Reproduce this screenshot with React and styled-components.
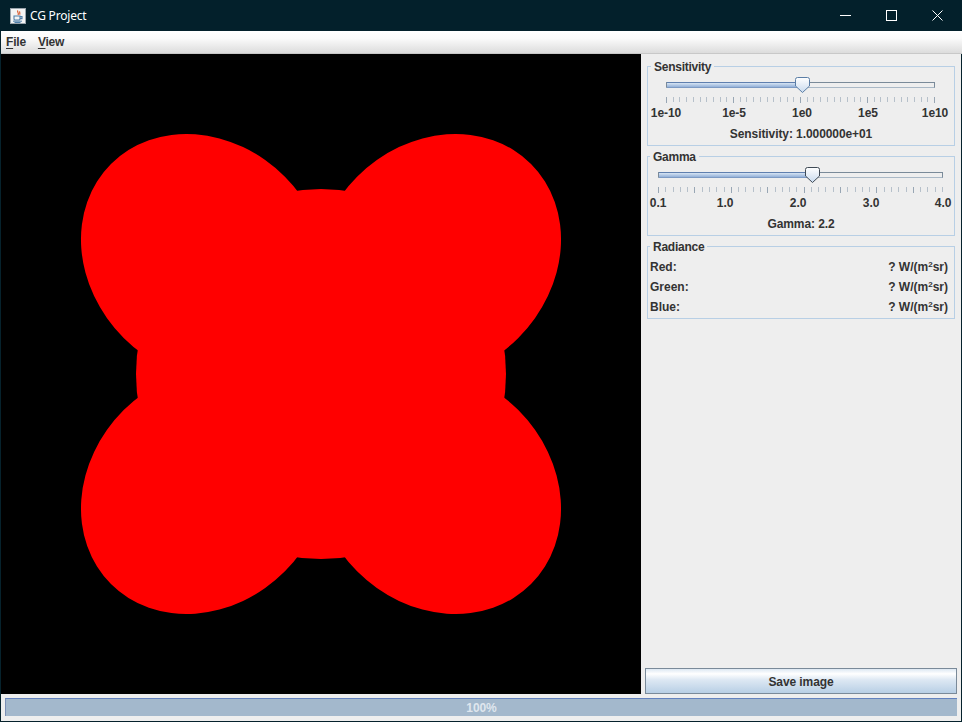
import React from 'react';
import styled, { createGlobalStyle } from 'styled-components';

const Global = createGlobalStyle`
  html, body { margin: 0; padding: 0; background: #03202b; overflow: hidden; }
  * { box-sizing: border-box; }
`;

const Win = styled.div`
  width: 962px; height: 722px; display: flex; flex-direction: column;
  border: 1px solid #06222c; border-top: 0; background: #eeeeee;
  font: bold 12px/14px "Liberation Sans", Arial, sans-serif; color: #333333;
  letter-spacing: -0.08px;
`;
const TitleBar = styled.div`
  height: 31px; flex: none; display: flex; align-items: center; background: #03202b;
  margin: 0 -1px; padding: 0 2px 0 10px; color: #ffffff;
  font: 12px/16px "Noto Sans", sans-serif; letter-spacing: -0.2px;
`;
const TitleText = styled.span`margin-left: 4px; flex: 1;`;
const WinBtn = styled.div`
  width: 46px; height: 31px; display: flex; align-items: center; justify-content: center;
  svg { display: block; }
`;
const MenuBar = styled.div`
  height: 23px; flex: none; display: flex; align-items: center; padding: 0 0 1px 5px; gap: 12px;
  background: linear-gradient(#ffffff 0%, #fafafa 35%, #dcdcdc 100%);
  border-bottom: 1px solid #c8c8c8; margin: 0 -1px 0 0;
  letter-spacing: -0.2px;
`;
const MenuItem = styled.span`u { text-decoration-thickness: 1px; text-underline-offset: 2px; }`;
const Main = styled.div`height: 640px; flex: none; display: flex;`;
const Canvas = styled.svg`width: 640px; height: 640px; display: block; flex: none; background: #000;`;
const Side = styled.div`
  width: 320px; flex: none; display: flex; flex-direction: column; gap: 4px; padding: 6px 6px 0;
`;
const Group = styled.fieldset`
  margin: 0; min-width: 0; padding: ${p => p.$pad}; border: 1px solid #b8cfe5; flex: none;
`;
const Legend = styled.legend`
  padding: 0 3px; margin-left: ${p => p.$shift}px; height: 13px; line-height: 15px; letter-spacing: -0.25px;
`;
const Slider = styled.div`padding: 4px ${p => p.$inset + 1}px 0 ${p => p.$inset}px;`;
const TrackArea = styled.div`position: relative; height: 15px; padding-top: 5px;`;
const Track = styled.div`
  height: 6px; display: flex; background: #eeeeee;
  border: 1px solid #7a8a99; border-bottom-color: #a9b8c6;
`;
const Fill = styled.div`
  height: 100%; background: linear-gradient(#d6e4f3, #93b0d8);
  box-shadow: 0 -1px 0 #5f7fae, 0 1px 0 #7d9bc4;
`;
const Thumb = styled.svg`position: absolute; top: 0; display: block;`;
const Ticks = styled.svg`display: block; margin-top: 5px; overflow: visible;`;
const Labels = styled.div`display: grid; margin-top: 3px; height: 14px;`;
const Label = styled.div`
  width: 0; display: flex; justify-content: center; white-space: nowrap;
`;
const Caption = styled.div`text-align: center; margin-top: 7px; height: 14px;`;
const Rows = styled.div`display: flex; flex-direction: column; gap: 6px; padding: 7px 6px 4px 2px;`;
const Row = styled.div`display: flex; justify-content: space-between; height: 14px; letter-spacing: 0;`;
const Sup = styled.sup`font-size: 8px; line-height: 0; vertical-align: 4px;`;
const Spacer = styled.div`flex: 1;`;
const SaveButton = styled.div`
  margin: 0 -2px; height: 26px; flex: none; display: flex; align-items: center; justify-content: center;
  padding-top: 1px;
  border: 1px solid #7a8a99;
  background: linear-gradient(#dde8f3 0%, #ffffff 20%, #dde8f3 45%, #b8cfe5 100%);
`;
const Status = styled.div`height: 27px; flex: none; padding: 4px 4px 5px;`;
const Progress = styled.div`
  height: 18px; display: flex; align-items: center; justify-content: center;
  background: #a3b8cc; color: #dfe6ee;
  border-top: 1px solid #6382bf; border-left: 1px solid #7b8fb5;
`;

const Knob = ({ left, stroke }) => (
  <Thumb width="16" height="16" viewBox="0 0 16 16" style={{ left }}>
    <defs>
      <linearGradient id={`k${left}`} x1="0" y1="0" x2="0" y2="1">
        <stop offset="0" stopColor="#ffffff" />
        <stop offset="1" stopColor="#c8daee" />
      </linearGradient>
    </defs>
    <path d="M2.5.5H12.5Q14.5.5 14.5 2.5V9L7.5 15.5.5 9V2.5Q.5.5 2.5.5Z" fill={`url(#k${left})`} stroke={stroke} />
  </Thumb>
);

const TickMarks = ({ width, count, major }) => (
  <Ticks width={width} height="6" viewBox={`0 0 ${width} 6`}>
    {Array.from({ length: count + 1 }, (_, i) => {
      const x = Math.round((i * (width - 1)) / count) + 0.5;
      const isMajor = i % major === 0;
      return <line key={i} x1={x} x2={x} y1="0" y2={isMajor ? 6 : 5} stroke={isMajor ? '#98a6b4' : '#b6c0ca'} />;
    })}
  </Ticks>
);

const SliderBlock = ({ inset, width, pos, stroke, count, major, labels, cols }) => (
  <Slider $inset={inset}>
    <TrackArea>
      <Track><Fill style={{ width: pos }} /></Track>
      <Knob left={pos - 7} stroke={stroke} />
    </TrackArea>
    <TickMarks width={width} count={count} major={major} />
    <Labels style={{ gridTemplateColumns: cols }}>
      {labels.map(l => <Label key={l}>{l}</Label>)}
    </Labels>
  </Slider>
);

const Blob = ({ cx, cy, angle }) => (
  <ellipse cx={cx} cy={cy} rx="132" ry="114" transform={`rotate(${angle} ${cx} ${cy})`} fill="#ff0000" />
);

const Unit = () => <span>? W/(m<Sup>2</Sup>sr)</span>;

export default function App() {
  return (
    <>
      <Global />
      <Win>
        <TitleBar>
          <svg width="16" height="16" viewBox="0 0 16 16">
            <rect x="0.5" y="0.5" width="15" height="15" fill="#f4f4f4" stroke="#9aa4ac" />
            <path d="M8 2.5C6.5 4 9.5 5 8 7M10 3.5C9 4.5 10.5 5.2 9.6 6.6" stroke="#d8501e" strokeWidth="1.1" fill="none" />
            <path d="M4 8H10V11Q10 12 9 12H5Q4 12 4 11ZM10 8.6H12V10.6H10" fill="none" stroke="#4f7ea8" strokeWidth="1.1" />
            <path d="M3 13.2H12M4.5 14.5H10.5" stroke="#4f7ea8" />
          </svg>
          <TitleText>CG Project</TitleText>
          <WinBtn>
            <svg width="11" height="11" viewBox="0 0 11 11"><path d="M0 5.5H11" stroke="#fff" /></svg>
          </WinBtn>
          <WinBtn>
            <svg width="11" height="11" viewBox="0 0 11 11"><rect x="0.5" y="0.5" width="10" height="10" fill="none" stroke="#fff" /></svg>
          </WinBtn>
          <WinBtn>
            <svg width="11" height="11" viewBox="0 0 11 11"><path d="M.5.5L10.5 10.5M10.5.5L.5 10.5" stroke="#fff" /></svg>
          </WinBtn>
        </TitleBar>
        <MenuBar>
          <MenuItem><u>F</u>ile</MenuItem>
          <MenuItem><u>V</u>iew</MenuItem>
        </MenuBar>
        <Main>
          <Canvas viewBox="0 0 640 640">
            <g transform="translate(-1 -54)">
              <circle cx="321" cy="374" r="185" fill="#ff0000" />
              <Blob cx={204.3} cy={257.3} angle={45} />
              <Blob cx={437.7} cy={257.3} angle={-45} />
              <Blob cx={204.3} cy={490.7} angle={-45} />
              <Blob cx={437.7} cy={490.7} angle={45} />
            </g>
          </Canvas>
          <Side>
            <Group $pad="0 0 4px">
              <Legend $shift={3}>Sensitivity</Legend>
              <SliderBlock inset={18} width={269} pos={136} stroke="#5b7ea6" count={40} major={10}
                labels={['1e-10', '1e-5', '1e0', '1e5', '1e10']} cols="68px 68px 66px 67px 0" />
              <Caption>Sensitivity: 1.000000e+01</Caption>
            </Group>
            <Group $pad="0 0 4px">
              <Legend $shift={2}>Gamma</Legend>
              <SliderBlock inset={10} width={285} pos={154} stroke="#3f4a55" count={39} major={5}
                labels={['0.1', '1.0', '2.0', '3.0', '4.0']} cols="67px 73px 73px 72px 0" />
              <Caption>Gamma: 2.2</Caption>
            </Group>
            <Group $pad="0">
              <Legend $shift={2}>Radiance</Legend>
              <Rows>
                <Row><span>Red:</span><Unit /></Row>
                <Row><span>Green:</span><Unit /></Row>
                <Row><span>Blue:</span><Unit /></Row>
              </Rows>
            </Group>
            <Spacer />
            <SaveButton>Save image</SaveButton>
          </Side>
        </Main>
        <Status>
          <Progress>100%</Progress>
        </Status>
      </Win>
    </>
  );
}
